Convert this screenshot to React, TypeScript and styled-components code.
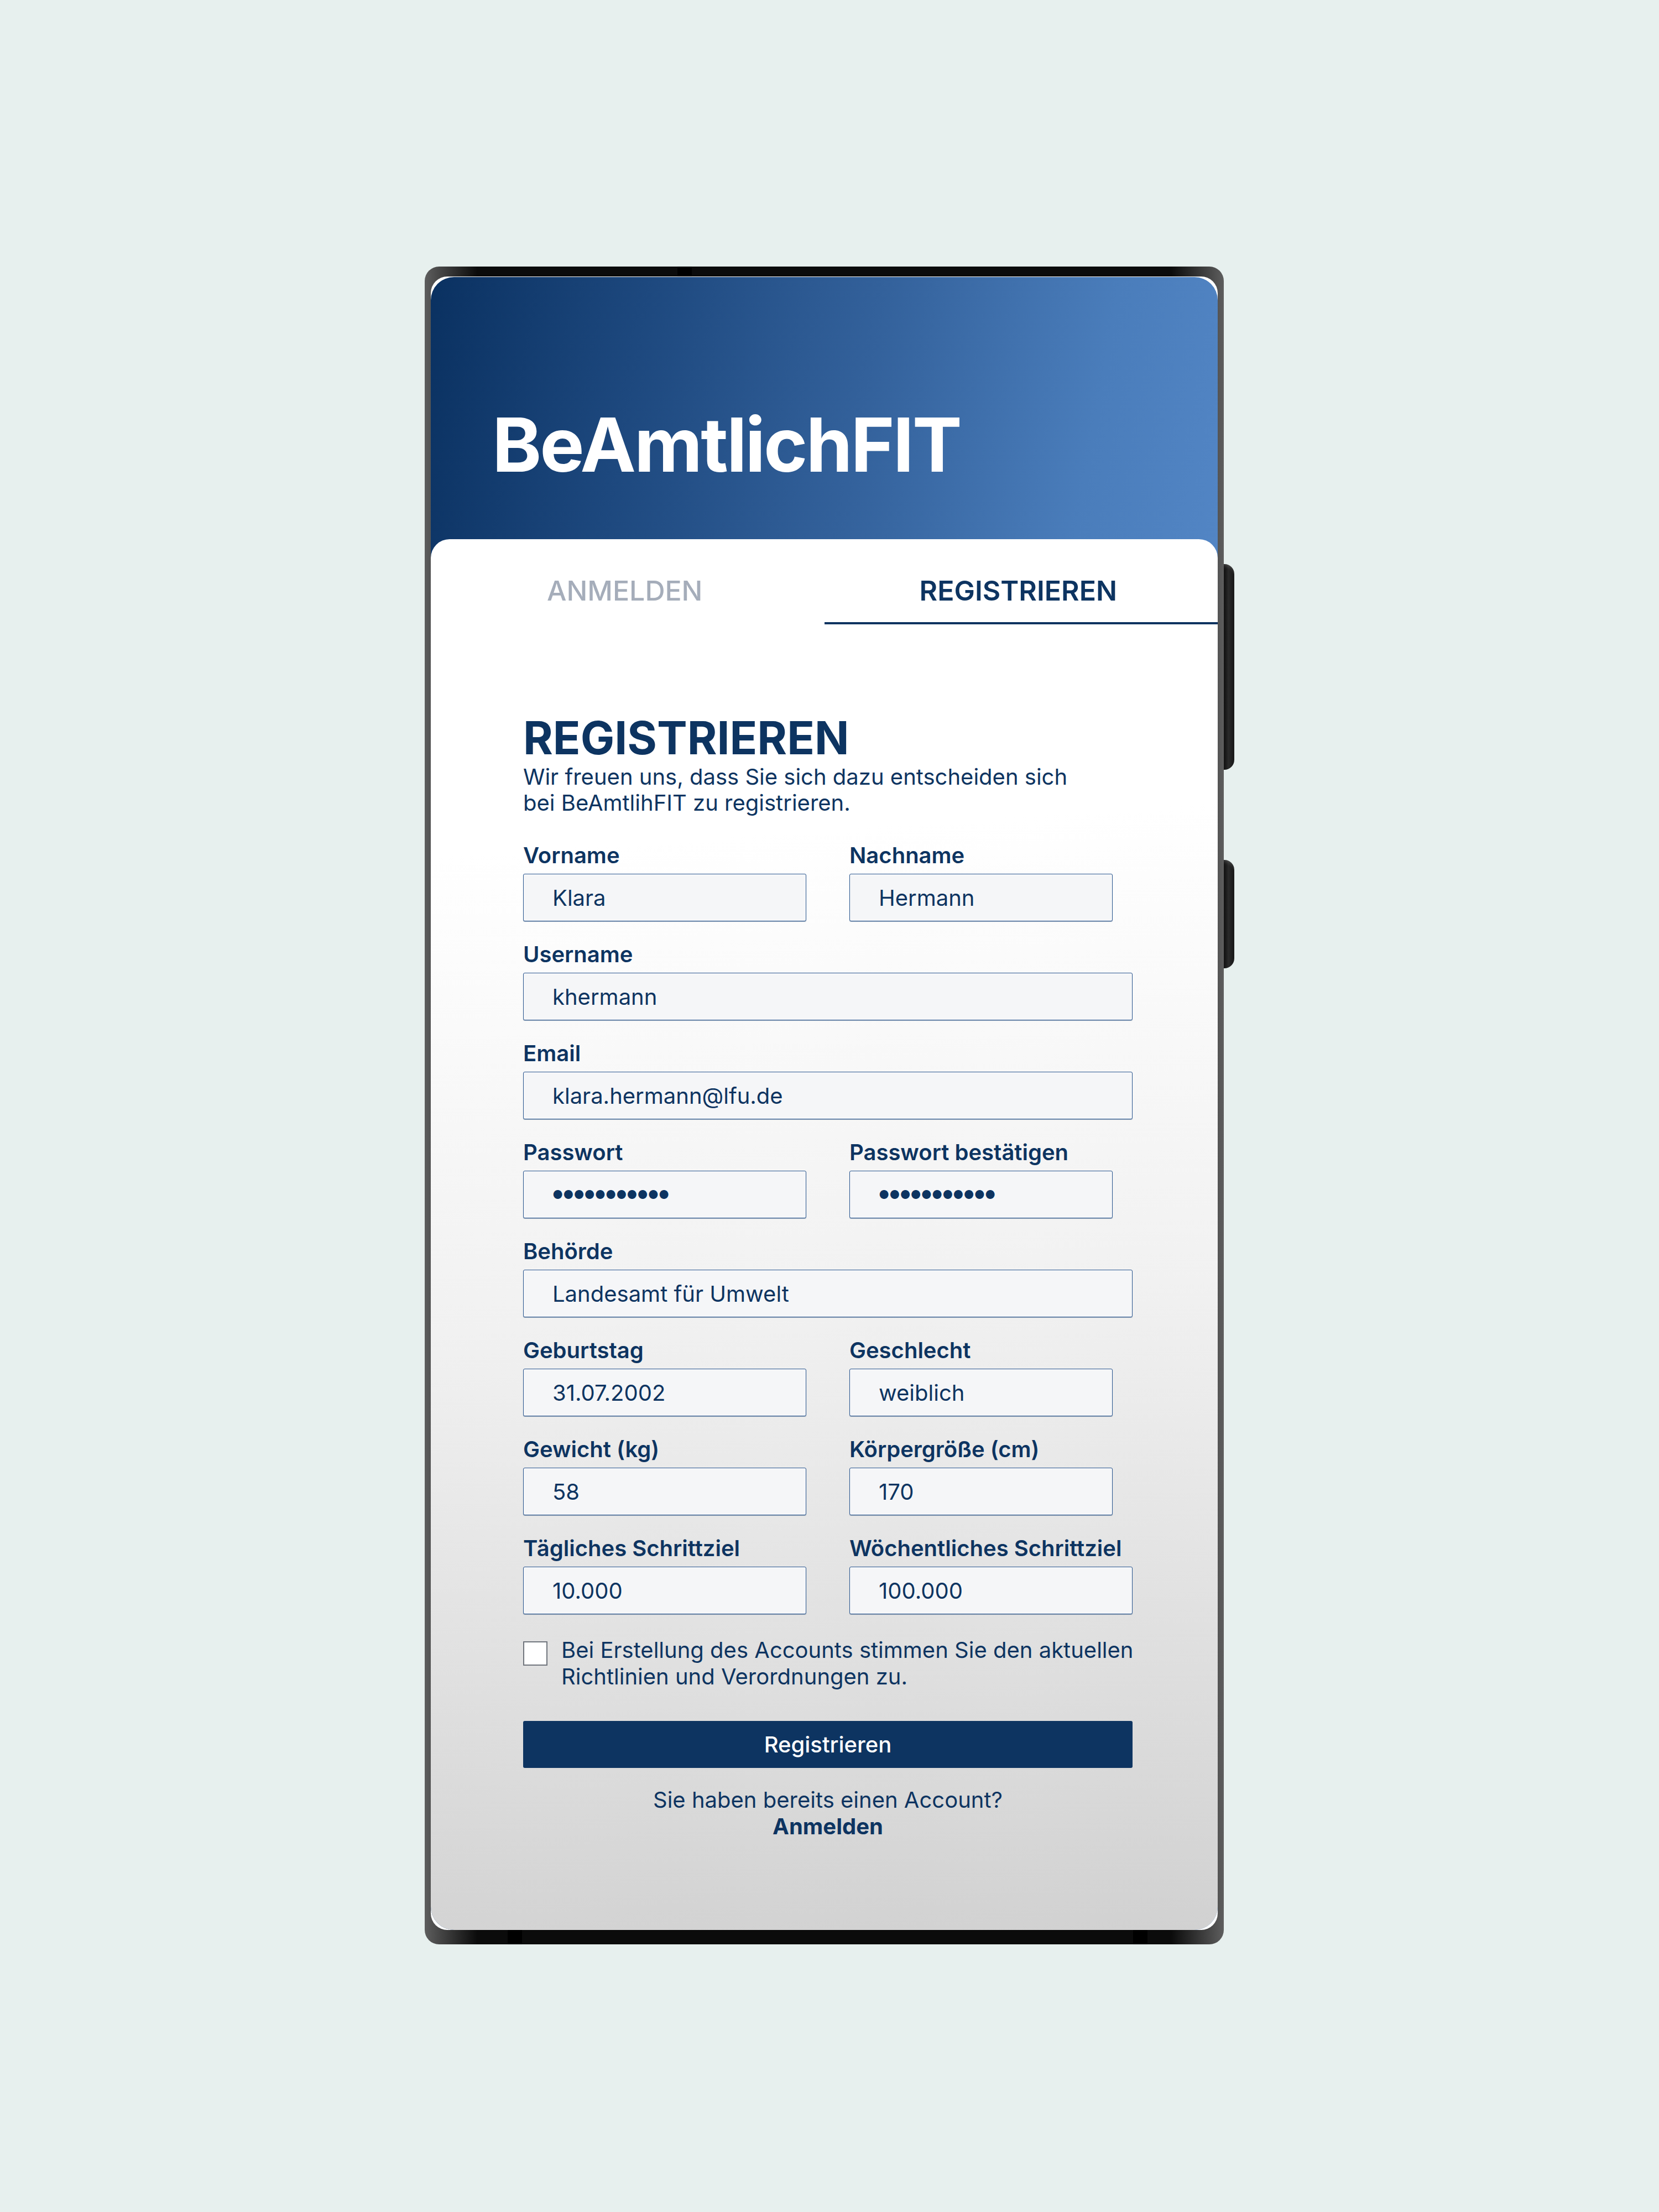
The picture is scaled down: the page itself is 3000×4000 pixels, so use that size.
import * as React from 'react'
import styled, { createGlobalStyle } from 'styled-components'

// ___________________________________________________________________

const navy = '#0d3461'

const GlobalStyle = createGlobalStyle`
  html, body {
    margin: 0;
    padding: 0;
    background: #e7f0ee;
  }
  * {
    box-sizing: border-box;
  }
`

type Field = {
  label: string
  value: string
  wide?: boolean
  narrow?: boolean
  password?: boolean
}

const rows: Field[][] = [
  [
    { label: 'Vorname', value: 'Klara' },
    { label: 'Nachname', value: 'Hermann', narrow: true },
  ],
  [{ label: 'Username', value: 'khermann', wide: true }],
  [{ label: 'Email', value: 'klara.hermann@lfu.de', wide: true }],
  [
    { label: 'Passwort', value: '●●●●●●●●●●●', password: true },
    {
      label: 'Passwort bestätigen',
      value: '●●●●●●●●●●●',
      password: true,
      narrow: true,
    },
  ],
  [{ label: 'Behörde', value: 'Landesamt für Umwelt', wide: true }],
  [
    { label: 'Geburtstag', value: '31.07.2002' },
    { label: 'Geschlecht', value: 'weiblich', narrow: true },
  ],
  [
    { label: 'Gewicht (kg)', value: '58' },
    { label: 'Körpergröße (cm)', value: '170', narrow: true },
  ],
  [
    { label: 'Tägliches Schrittziel', value: '10.000' },
    { label: 'Wöchentliches Schrittziel', value: '100.000' },
  ],
]

const App: React.FC = () => {
  return (
    <Page>
      <GlobalStyle />
      <Phone>
        <SideButton top={538} height={372} />
        <SideButton top={1073} height={196} />
        <Antenna edge="top" left={457} />
        <Antenna edge="bottom" left={150} />
        <Antenna edge="bottom" left={1281} />
        <Screen>
          <Content>
            <Header>
              <Title>BeAmtlichFIT</Title>
            </Header>
            <Card>
              <Tabs>
                <Tab>ANMELDEN</Tab>
                <Tab active>REGISTRIEREN</Tab>
              </Tabs>
              <Form>
                <Heading>REGISTRIEREN</Heading>
                <Intro>
                  Wir freuen uns, dass Sie sich dazu entscheiden sich
                  <br />
                  bei BeAmtlihFIT zu registrieren.
                </Intro>
                <Fields>
                  {rows.flat().map((f) => (
                    <FieldBox key={f.label} wide={f.wide}>
                      <Label>{f.label}</Label>
                      <Input narrow={f.narrow} password={f.password}>
                        {f.value}
                      </Input>
                    </FieldBox>
                  ))}
                </Fields>
                <Consent>
                  <Checkbox />
                  <ConsentText>
                    Bei Erstellung des Accounts stimmen Sie den aktuellen
                    <br />
                    Richtlinien und Verordnungen zu.
                  </ConsentText>
                </Consent>
                <Button>Registrieren</Button>
                <Footer>
                  Sie haben bereits einen Account?
                  <br />
                  <strong>Anmelden</strong>
                </Footer>
              </Form>
            </Card>
          </Content>
        </Screen>
      </Phone>
    </Page>
  )
}

export default App

// ___________________________________________________________________

const Page = styled.div`
  width: 3000px;
  min-height: 4000px;
  padding: 482px 0 0 768px;
  background: #e7f0ee;
  font-family: 'Inter', 'Noto Sans', sans-serif;
`

const Phone = styled.div`
  position: relative;
  width: 1445px;
  height: 3034px;
  padding: 18px 11px 26px;
  border-radius: 26px;
  background: linear-gradient(
    to right,
    #5e5e5e 0,
    #545454 11px,
    #0b0b0b 95px,
    #0b0b0b calc(100% - 95px),
    #545454 calc(100% - 11px),
    #5e5e5e 100%
  );
`

const SideButton = styled.div<{ top: number; height: number }>`
  position: absolute;
  left: 100%;
  top: ${(p) => p.top}px;
  width: 19px;
  height: ${(p) => p.height}px;
  border-radius: 0 18px 18px 0;
  background: linear-gradient(to right, #0e0e0e, #2a2a2a 45%, #161616);
  box-shadow: inset 0 6px 6px -3px rgba(255, 255, 255, 0.18);
`

const Antenna = styled.div<{ edge: 'top' | 'bottom'; left: number }>`
  position: absolute;
  left: ${(p) => p.left}px;
  ${(p) => (p.edge === 'top' ? 'top: 0; height: 18px;' : 'bottom: 0; height: 26px;')}
  width: 26px;
  background: #000;
`

const Screen = styled.div`
  height: 100%;
  padding-top: 1px;
  border-radius: 30px;
  background: #fff;
  overflow: hidden;
`

const Content = styled.div`
  display: flex;
  flex-direction: column;
  height: 100%;
  border-radius: 42px;
  overflow: hidden;
  background: linear-gradient(
    100deg,
    #0a3161 0%,
    #1d487e 20%,
    #33619b 42%,
    #4a7dbb 64%,
    #5689c9 84%,
    #6197d9 100%
  );
`

const Header = styled.div`
  height: 474px;
  padding: 236px 0 0 111px;
`

const Title = styled.h1`
  margin: 0;
  font-size: 135px;
  line-height: 135px;
  font-weight: 700;
  letter-spacing: -3px;
  color: #fff;
`

const Card = styled.div`
  flex: 1;
  border-radius: 34px 34px 0 0;
  background: linear-gradient(176deg, #ffffff 22%, #f1f1f1 55%, #d1d1d1 100%);
`

const Tabs = styled.div`
  display: grid;
  grid-template-columns: 1fr 1fr;
`

const Tab = styled.div<{ active?: boolean }>`
  display: flex;
  align-items: center;
  justify-content: center;
  height: 154px;
  padding: 36px 10px 0 0;
  border-bottom: 4px solid ${(p) => (p.active ? navy : 'transparent')};
  font-size: 50px;
  font-weight: ${(p) => (p.active ? 600 : 500)};
  color: ${(p) => (p.active ? navy : '#a5adba')};
`

const Form = styled.div`
  width: 1102px;
  margin: 161px 0 0 167px;
  color: ${navy};
`

const Heading = styled.h2`
  margin: 0;
  font-size: 82px;
  line-height: 90px;
  font-weight: 700;
`

const Intro = styled.p`
  margin: 1px 0 0;
  font-size: 40px;
  line-height: 47px;
`

const Fields = styled.div`
  display: grid;
  grid-template-columns: 512px 512px;
  column-gap: 78px;
  row-gap: 37px;
  margin-top: 49px;
`

const FieldBox = styled.div<{ wide?: boolean }>`
  display: flex;
  flex-direction: column;
  gap: 10px;
  grid-column: ${(p) => (p.wide ? '1 / -1' : 'auto')};
`

const Label = styled.div`
  font-size: 40px;
  line-height: 46px;
  font-weight: 600;
`

const Input = styled.div<{ narrow?: boolean; password?: boolean }>`
  display: flex;
  align-items: center;
  width: ${(p) => (p.narrow ? '476px' : '100%')};
  height: 86px;
  padding-left: 52px;
  border: 1px solid #2c5891;
  border-radius: 3px;
  box-shadow: 0 1px 1px rgba(13, 52, 97, 0.4);
  background: #f5f6f8;
  font-size: ${(p) => (p.password ? '21px' : '40px')};
  color: ${navy};
`

const Consent = styled.div`
  display: flex;
  align-items: flex-start;
  gap: 25px;
  margin-top: 41px;
`

const Checkbox = styled.div`
  flex: none;
  width: 44px;
  height: 44px;
  margin-top: 8px;
  border: 2px solid #70757d;
  background: #fff;
`

const ConsentText = styled.div`
  font-size: 40px;
  line-height: 48px;
  white-space: nowrap;
`

const Button = styled.div`
  display: flex;
  align-items: center;
  justify-content: center;
  height: 85px;
  margin-top: 56px;
  border-radius: 3px;
  background: ${navy};
  font-size: 40px;
  font-weight: 500;
  color: #fff;
`

const Footer = styled.div`
  margin-top: 34px;
  text-align: center;
  font-size: 40px;
  line-height: 48px;

  strong {
    font-weight: 700;
  }
`
